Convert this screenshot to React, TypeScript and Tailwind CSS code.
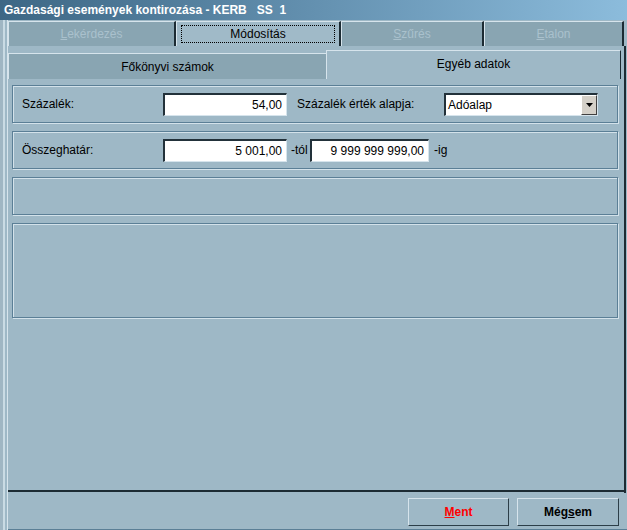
import React from 'react'

const font = { fontFamily: '"Liberation Sans", Arial, sans-serif' }

const MainTab = ({ label, u, active, w }: { label: string; u: string; active?: boolean; w: string }) => (
	<div
		className={`${w} h-full flex items-center justify-center border-t border-l border-t-[#d6e4ec] border-l-[#d6e4ec] border-r-2 border-r-[#1c2b33] ${
			active ? 'bg-[#a0bac8]' : 'bg-[#89a5b2]'
		}`}
	>
		{active ? (
			<div className="w-[calc(100%-8px)] h-[18px] border border-dotted border-black flex items-center justify-center text-[12px] text-black">
				{label}
			</div>
		) : (
			<span className="text-[12px] text-[#aac1cd]">
				<span className="underline">{u}</span>
				{label.slice(u.length)}
			</span>
		)}
	</div>
)

const Panel = ({ h, children }: { h: string; children?: React.ReactNode }) => (
	<div className={`${h} border border-[#5b7f96] shadow-[inset_1px_1px_0_#d3e2ea,1px_1px_0_#d3e2ea] flex items-center px-[9px]`}>
		{children}
	</div>
)

const Field = ({ w, value }: { w: string; value: string }) => (
	<div className={`${w} h-[23px] bg-white border-t-2 border-l-2 border-t-[#22313a] border-l-[#22313a] border-b border-r border-b-[#d6e4ec] border-r-[#d6e4ec] flex items-center justify-end pr-[4px] text-[12px] text-black`}>
		{value}
	</div>
)

export default function App() {
	return (
		<div className="w-[627px] h-[530px] bg-[#9eb8c6] flex flex-col overflow-hidden select-none" style={font}>
			<div className="h-[20px] shrink-0 bg-gradient-to-r from-[#3d6785] to-[#8cbcdc] flex items-center pl-[4px]">
				<span className="text-white font-bold text-[12px] whitespace-pre">
					Gazdasági események kontirozása - KERB   SS  1
				</span>
			</div>
			<div className="flex-1 flex">
				<div className="w-[8px] shrink-0 flex">
					<div className="w-[3px] bg-[#9fb6c3]" />
					<div className="w-[2px] bg-[#c9dbe4]" />
					<div className="w-[2px] bg-[#9eb8c6]" />
					<div className="w-[1px] bg-[#d6e4ec]" />
				</div>
				<div className="flex-1 flex flex-col">
					<div className="h-[25px] mt-[1px] flex">
						<MainTab w="w-[168px]" label="Lekérdezés" u="L" />
						<MainTab w="w-[165px]" label="Módosítás" u="" active />
						<MainTab w="w-[143px]" label="Szűrés" u="S" />
						<MainTab w="w-[140px]" label="Etalon" u="E" />
					</div>
					<div className="flex-1 flex border-r-2 border-r-[#1c2b33] mr-[1px]">
						<div className="flex-1 flex flex-col">
							<div className="h-[31px] mt-[2px] flex items-end">
								<div className="w-[318px] h-[26px] bg-[#89a5b2] border-t border-l border-t-[#d6e4ec] border-l-[#d6e4ec] flex items-center justify-center text-[12px] text-black">
									Főkönyvi számok
								</div>
								<div className="flex-1 h-[29px] bg-[#9eb8c6] border-t border-l border-t-[#d6e4ec] border-l-[#d6e4ec] border-r border-r-[#1c2b33] mr-[3px] flex items-center justify-center text-[12px] text-black pb-[3px]">
									Egyéb adatok
								</div>
							</div>
							<div className="flex-1 flex flex-col gap-[8px] pl-[4px] pr-[6px] pt-[6px]">
								<Panel h="h-[38px]">
									<span className="w-[141px] text-[12px] text-black">Százalék:</span>
									<Field w="w-[124px]" value="54,00" />
									<span className="w-[157px] pl-[10px] text-[12px] text-black">Százalék érték alapja:</span>
									<div className="w-[154px] h-[23px] bg-white border-t-2 border-l-2 border-t-[#22313a] border-l-[#22313a] border-b border-r border-b-[#d6e4ec] border-r-[#d6e4ec] flex items-center">
										<span className="flex-1 pl-[2px] text-[12px] text-black">Adóalap</span>
										<div className="w-[16px] h-full bg-[#d4d0c8] border-t border-l border-t-white border-l-white border-r border-b border-r-[#404040] border-b-[#404040] flex items-center justify-center">
											<svg width="7" height="4" viewBox="0 0 7 4">
												<path d="M0 0h7L3.5 4z" fill="#000" />
											</svg>
										</div>
									</div>
								</Panel>
								<Panel h="h-[38px]">
									<span className="w-[141px] text-[12px] text-black">Összeghatár:</span>
									<Field w="w-[124px]" value="5 001,00" />
									<span className="w-[23px] pl-[4px] text-[12px] text-black">-tól</span>
									<Field w="w-[119px]" value="9 999 999 999,00" />
									<span className="pl-[5px] text-[12px] text-black">-ig</span>
								</Panel>
								<Panel h="h-[38px]" />
								<Panel h="h-[95px]" />
							</div>
							<div className="h-[2px] bg-[#1c2b33] mb-[1px]" />
						</div>
					</div>
					<div className="h-[37px] flex justify-end items-start gap-[8px] pr-[8px] pt-[5px] border-b border-b-[#5b7f96] shadow-[0_1px_0_#c9dbe4]">
						<button className="w-[101px] h-[28px] bg-[#9eb8c6] border border-t-[#d6e4ec] border-l-[#d6e4ec] border-r-[#2c3e48] border-b-[#2c3e48] text-[12px] font-bold text-[#ff0000]">
							<span className="underline">M</span>ent
						</button>
						<button className="w-[102px] h-[28px] bg-[#9eb8c6] border border-t-[#d6e4ec] border-l-[#d6e4ec] border-r-[#2c3e48] border-b-[#2c3e48] text-[12px] font-bold text-black">
							Még<span className="underline">s</span>em
						</button>
					</div>
				</div>
			</div>
		</div>
	)
}
